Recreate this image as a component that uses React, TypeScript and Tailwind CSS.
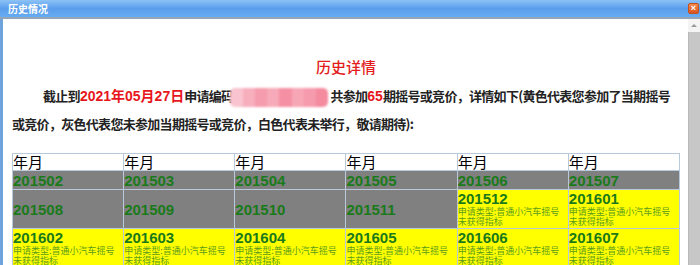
import React from 'react';

const cjk = { fontFamily: '"Noto Sans CJK SC", sans-serif' };
const num = { fontFamily: '"Liberation Sans", "Noto Sans CJK SC", sans-serif' };

type Cell = { ym: string; kind: 'gray' | 'yellow' };

const rows: Cell[][] = [
  ['201502', '201503', '201504', '201505', '201506', '201507'].map((ym) => ({ ym, kind: 'gray' as const })),
  [
    { ym: '201508', kind: 'gray' },
    { ym: '201509', kind: 'gray' },
    { ym: '201510', kind: 'gray' },
    { ym: '201511', kind: 'gray' },
    { ym: '201512', kind: 'yellow' },
    { ym: '201601', kind: 'yellow' },
  ],
  ['201602', '201603', '201604', '201605', '201606', '201607'].map((ym) => ({ ym, kind: 'yellow' as const })),
];

const Mosaic: React.FC = () => (
  <span className="inline-flex align-middle ml-[-3px] mr-[2px] h-[19px] w-[98px] overflow-hidden rounded-[5px] blur-[1px]">
    {['#f9c4cf', '#f7aebd', '#f59cae', '#f7aab9', '#f590a4', '#f7a6b6', '#f69aad', '#f48b9f'].map((c, i) => (
      <span key={i} className="flex-1 h-full" style={{ backgroundColor: c }} />
    ))}
  </span>
);

const Red: React.FC<{ children: React.ReactNode }> = ({ children }) => (
  <span className="text-[#e8161c] text-[14px] font-bold tracking-normal" style={num}>
    {children}
  </span>
);

export default function App() {
  return (
    <div className="w-[700px] h-[265px] overflow-hidden bg-white flex flex-col" style={cjk}>
      {/* title bar */}
      <div className="h-[19px] shrink-0 flex items-center justify-between pl-[8px] pr-[1px] bg-gradient-to-b from-[#8cc2f6] via-[#5a9eec] to-[#67abf1] border-b-2 border-[#93a5b8]">
        <span className="text-white text-[10px] font-bold leading-none">历史情况</span>
        <span className="w-[11px] h-[11px] rounded-[2px] bg-gradient-to-b from-[#f3894d] to-[#d9531e] border border-[#c4521e] flex items-center justify-center text-white text-[9px] font-bold leading-none" style={num}>
          ×
        </span>
      </div>

      <div className="flex flex-1 min-h-0">
        <div className="flex-1 border-l-[3px] border-[#6fa3dc] pl-[9px] pr-[8px] pt-[38px]">
          <h2 className="text-center text-[15px] leading-[20px] text-[#e21c1c] font-medium">历史详情</h2>

          <div className="mt-[5px] text-[13px] leading-[27px] font-bold text-[#222] tracking-[-0.7px] whitespace-nowrap">
            <div className="pl-[31px]">
              截止到<Red>2021年05月27日</Red>申请编码<Mosaic />共参加<Red>65</Red>期摇号或竞价，详情如下(黄色代表您参加了当期摇号
            </div>
            <div>或竞价，灰色代表您未参加当期摇号或竞价，白色代表未举行，敬请期待):</div>
          </div>

          <div className="mt-[16px] grid grid-cols-6 gap-px p-px bg-[#b9c9dc]">
            {Array.from({ length: 6 }).map((_, i) => (
              <div key={i} className="bg-white h-[16px] text-[15px] leading-[16px] text-black">
                年月
              </div>
            ))}
            {rows.map((row, r) =>
              row.map((c) =>
                c.kind === 'gray' ? (
                  <div
                    key={c.ym}
                    className={`bg-[#808080] flex items-center ${r === 0 ? 'h-[18px]' : 'h-[38px]'}`}
                  >
                    <span className="text-[15px] font-bold text-[#1a7a1a] leading-none" style={num}>
                      {c.ym}
                    </span>
                  </div>
                ) : (
                  <div key={c.ym} className="bg-[#ffff00] h-[38px]">
                    <div className="text-[15px] font-bold text-[#1a7a1a] leading-[17px]" style={num}>
                      {c.ym}
                    </div>
                    <div className="text-[9px] leading-[10px] text-[#5c9c1c]">申请类型:普通小汽车摇号</div>
                    <div className="text-[9px] leading-[10px] text-[#5c9c1c]">未获得指标</div>
                  </div>
                )
              )
            )}
          </div>
        </div>

        {/* scrollbar */}
        <div className="w-[12px] shrink-0 flex flex-col">
          <div className="h-[13px] bg-[#f4f4f4] flex items-center justify-center">
            <span className="w-0 h-0 border-l-[3px] border-r-[3px] border-b-[3px] border-l-transparent border-r-transparent border-b-[#9a9a9a]" />
          </div>
          <div className="flex-1 bg-[#c7c7c7] border-l border-[#b9b9b9]" />
        </div>
      </div>
    </div>
  );
}
